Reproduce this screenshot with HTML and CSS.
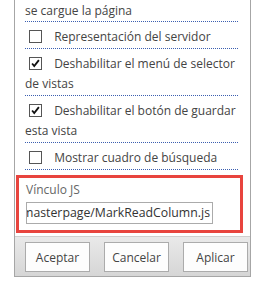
FILE: index.html
```html
<!DOCTYPE html>
<html>
<head>
<title>Propiedades del elemento web</title>
<link rel="stylesheet" href="styles.css">
</head>
<body>
<div class="panel">
    <div class="content">
        <div class="row first">se cargue la página</div>
        <div class="row">
            <span class="box"></span>
            <span class="label">Representación del servidor</span>
        </div>
        <div class="row">
            <span class="box on"><svg viewBox="0 0 13 13"><path d="M2.5 6.5 L5 9.5 L10.5 2.5" /></svg></span>
            <span class="label">Deshabilitar el menú de selector de vistas</span>
        </div>
        <div class="row">
            <span class="box on"><svg viewBox="0 0 13 13"><path d="M2.5 6.5 L5 9.5 L10.5 2.5" /></svg></span>
            <span class="label">Deshabilitar el botón de guardar esta vista</span>
        </div>
        <div class="row">
            <span class="box"></span>
            <span class="label">Mostrar cuadro de búsqueda</span>
        </div>
        <div class="mark">
            <div class="caption">Vínculo JS</div>
            <div class="field"><span>~sitecollection/_catalogs/masterpage/MarkReadColumn.js</span></div>
        </div>
    </div>
    <div class="footer">
        <button class="btn">Aceptar</button>
        <button class="btn">Cancelar</button>
        <button class="btn">Aplicar</button>
    </div>
</div>
</body>
</html>
```

FILE: styles.css
```css
* {
    margin: 0;
    padding: 0;
    box-sizing: border-box;
}

body {
    background: #fff;
    font-family: "Open Sans", "Noto Sans", sans-serif;
    font-size: 12px;
    color: #444;
}

.panel {
    width: 237px;
    margin-left: 14px;
    border: 1px solid #a6a6a6;
    border-top: none;
    background: #fff;
}

.content {
    padding: 0 12px 3px 10px;
}

.row {
    line-height: 20px;
    padding: 5px 0 1px 0;
    border-bottom: 1px dotted #3b5fb0;
}

.row .label {
    margin-right: -3px;
}

.row.first {
    padding-top: 1px;
    padding-bottom: 0;
}

.row .box {
    display: inline-block;
    width: 13px;
    height: 13px;
    border: 1px solid #555;
    margin: 0 9px 0 4px;
    vertical-align: -2px;
    background: #fff;
}

.row .box svg {
    display: block;
    width: 11px;
    height: 11px;
}

.row .box path {
    fill: none;
    stroke: #111;
    stroke-width: 2.2;
}

.mark {
    margin: 5px -5px 0 -9px;
    border: 3px solid #e8443e;
    padding: 1px 26px 6px 7px;
}

.mark .caption {
    line-height: 21px;
    color: #666;
}

.mark .field {
    width: 187px;
    height: 22px;
    margin-top: 2px;
    border: 1px solid #ababab;
    overflow: hidden;
    white-space: nowrap;
    direction: rtl;
    text-align: right;
    font-size: 12.3px;
    line-height: 20px;
    color: #333;
}

.mark .field span {
    direction: ltr;
    unicode-bidi: isolate;
    padding-right: 2px;
}

.footer {
    display: flex;
    gap: 14px;
    padding: 5px 1px 4px 10px;
    border-top: 1px solid #cfcfcf;
    background: linear-gradient(#e9e9e9, #d6d6d6);
}

.btn {
    width: 65px;
    height: 30px;
    border: 1px solid #ababab;
    background: #fdfdfd;
    font-family: "Open Sans", "Noto Sans", sans-serif;
    font-size: 12px;
    color: #444;
}
```
